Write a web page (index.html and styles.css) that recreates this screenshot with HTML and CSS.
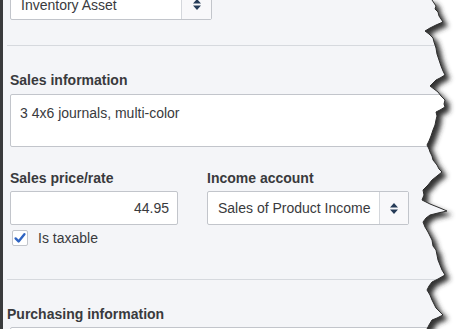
FILE: index.html
```html
<!DOCTYPE html>
<html lang="en">
<head>
	<meta charset="UTF-8">
	<title>Product / service</title>
	<link rel="stylesheet" href="styles.css">
</head>
<body>
<div class="frame">
	<div class="rail"></div>
	<div class="panel">
		<div class="select select-top">
			<span class="select-text">Inventory Asset</span>
			<span class="select-btn">
				<svg width="8" height="11" viewBox="0 0 8 11"><path d="M0 4.5 L4 0 L8 4.5 Z M0 6.5 L8 6.5 L4 11 Z" fill="#253b57"/></svg>
			</span>
		</div>

		<div class="rule"></div>

		<div class="label label-sales">Sales information</div>
		<div class="textarea">3 4x6 journals, multi-color</div>

		<div class="row">
			<div class="col col-price">
				<div class="label">Sales price/rate</div>
				<div class="input num">44.95</div>
				<div class="check">
					<span class="box">
						<svg width="14" height="14" viewBox="0 0 14 14"><path d="M2.6 7.4 L5.6 10.4 L11.4 3.2" fill="none" stroke="#2f64c2" stroke-width="2.4" stroke-linecap="round" stroke-linejoin="round"/></svg>
					</span>
					<span class="check-text">Is taxable</span>
				</div>
			</div>
			<div class="col col-income">
				<div class="label">Income account</div>
				<div class="select">
					<span class="select-text clip">Sales of Product Income</span>
					<span class="select-btn">
						<svg width="8" height="11" viewBox="0 0 8 11"><path d="M0 4.5 L4 0 L8 4.5 Z M0 6.5 L8 6.5 L4 11 Z" fill="#253b57"/></svg>
					</span>
				</div>
			</div>
		</div>

		<div class="rule rule-purchase"></div>

		<div class="label label-flush">Purchasing information</div>
		<div class="input input-wide"></div>
	</div>

	<!-- torn paper edge -->
	<svg class="tear" width="60" height="329" viewBox="0 0 60 329">
		<defs>
			<filter id="blur" x="-50%" y="-10%" width="200%" height="120%">
				<feGaussianBlur stdDeviation="2.4"/>
			</filter>
			<clipPath id="outside">
				<polygon points="60,0 22,0 24,3 26,6 25,9 28,12 29,16 31,19 33,22 26,25 20,28 15,31 19,34 23,38 24,42 26,48 27,54 29,60 31,66 33,71 35,75 30,78 26,80 23,83 20,86 24,89 28,92 31,96 35,100 34,104 35,107 30,110 26,112 27,116 26,120 25,125 23,130 21,136 19,141 17,145 19,149 20,152 22,156 23,160 27,165 29,169 32,172 27,176 22,180 18,185 13,190 14,195 12,200 20,204 30,208 37,211 28,213 20,215 16,218 13,222 15,227 18,232 20,236 22,240 23,246 26,250 27,255 28,260 30,265 32,270 35,275 28,279 22,282 19,286 17,290 20,295 22,300 24,304 26,308 30,312 33,315 27,318 22,320 19,325 17,329 60,329"/>
			</clipPath>
		</defs>
		<polygon points="60,0 22,0 24,3 26,6 25,9 28,12 29,16 31,19 33,22 26,25 20,28 15,31 19,34 23,38 24,42 26,48 27,54 29,60 31,66 33,71 35,75 30,78 26,80 23,83 20,86 24,89 28,92 31,96 35,100 34,104 35,107 30,110 26,112 27,116 26,120 25,125 23,130 21,136 19,141 17,145 19,149 20,152 22,156 23,160 27,165 29,169 32,172 27,176 22,180 18,185 13,190 14,195 12,200 20,204 30,208 37,211 28,213 20,215 16,218 13,222 15,227 18,232 20,236 22,240 23,246 26,250 27,255 28,260 30,265 32,270 35,275 28,279 22,282 19,286 17,290 20,295 22,300 24,304 26,308 30,312 33,315 27,318 22,320 19,325 17,329 60,329" fill="#fff"/>
		<g clip-path="url(#outside)">
			<polygon transform="translate(5,4)" filter="url(#blur)" fill="#333" points="-20,-10 22,0 24,3 26,6 25,9 28,12 29,16 31,19 33,22 26,25 20,28 15,31 19,34 23,38 24,42 26,48 27,54 29,60 31,66 33,71 35,75 30,78 26,80 23,83 20,86 24,89 28,92 31,96 35,100 34,104 35,107 30,110 26,112 27,116 26,120 25,125 23,130 21,136 19,141 17,145 19,149 20,152 22,156 23,160 27,165 29,169 32,172 27,176 22,180 18,185 13,190 14,195 12,200 20,204 30,208 37,211 28,213 20,215 16,218 13,222 15,227 18,232 20,236 22,240 23,246 26,250 27,255 28,260 30,265 32,270 35,275 28,279 22,282 19,286 17,290 20,295 22,300 24,304 26,308 30,312 33,315 27,318 22,320 19,325 17,329 -20,340"/>
		</g>
		<polyline fill="none" stroke="#2e2e2e" stroke-width="1" points="22,0 24,3 26,6 25,9 28,12 29,16 31,19 33,22 26,25 20,28 15,31 19,34 23,38 24,42 26,48 27,54 29,60 31,66 33,71 35,75 30,78 26,80 23,83 20,86 24,89 28,92 31,96 35,100 34,104 35,107 30,110 26,112 27,116 26,120 25,125 23,130 21,136 19,141 17,145 19,149 20,152 22,156 23,160 27,165 29,169 32,172 27,176 22,180 18,185 13,190 14,195 12,200 20,204 30,208 37,211 28,213 20,215 16,218 13,222 15,227 18,232 20,236 22,240 23,246 26,250 27,255 28,260 30,265 32,270 35,275 28,279 22,282 19,286 17,290 20,295 22,300 24,304 26,308 30,312 33,315 27,318 22,320 19,325 17,329"/>
	</svg>
</div>
</body>
</html>
```

FILE: styles.css
```css
* {
	margin: 0;
	padding: 0;
	box-sizing: border-box;
}
body {
	background: #fff;
	font-family: "Liberation Sans", Arial, sans-serif;
	font-size: 14px;
	color: #393a3d;
}
.frame {
	position: relative;
	display: flex;
	width: 470px;
	height: 329px;
	overflow: hidden;
}
.rail {
	width: 3px;
	flex: none;
	background: #3a3b3d;
}
.panel {
	flex: 1;
	padding-left: 4px;
	background: #f4f5f8;
}

/* inputs */
.select,
.input,
.textarea {
	display: flex;
	height: 34px;
	background: #fff;
	border: 1px solid #c2c5cb;
	border-radius: 2px;
	line-height: 16px;
}
.select-top {
	width: 202px;
	margin: -14px 0 0 3px;
}
.select-text {
	flex: 1;
	min-width: 0;
	padding: 8px 0 0 10px;
	white-space: nowrap;
	overflow: hidden;
}
.select-text.clip {
	margin-right: 5px;
}
.select-top .select-text {
	padding-top: 10px;
}
.select-btn {
	display: flex;
	align-items: center;
	justify-content: center;
	width: 30px;
	flex: none;
	border-left: 1px solid #d4d7dc;
	background: #f8f8fa;
}
.select-top .select-btn {
	padding-top: 3px;
}
.input {
	padding: 8px 8px 0;
}
.num {
	justify-content: flex-end;
}
.textarea {
	height: 53px;
	margin: 6px 0 0 3px;
	padding: 10px 9px;
}
.input-wide {
	margin-top: 5px;
	margin-left: 3px;
}

/* labels */
.label {
	font-weight: bold;
	line-height: 16px;
}
.label-sales {
	margin: 26px 0 0 3px;
}
.label-flush {
	margin-top: 26px;
}
.col .label {
	margin-bottom: 5px;
}

.rule {
	height: 1px;
	margin-top: 25px;
	background: #d6d9de;
}
.rule-purchase {
	margin-top: 33px;
}

/* price / income row */
.row {
	display: flex;
	gap: 29px;
	margin: 23px 0 0 3px;
}
.col-price {
	width: 168px;
}
.col-income {
	width: 202px;
}
.col-income .select-btn {
	width: 29px;
}

.check {
	display: flex;
	align-items: center;
	gap: 10px;
	margin: 5px 0 0 2px;
	line-height: 16px;
}
.box {
	display: flex;
	align-items: center;
	justify-content: center;
	width: 16px;
	height: 16px;
	background: #fff;
	border: 1px solid #c2c5cb;
	border-radius: 2px;
}

.tear {
	position: absolute;
	top: 0;
	right: 0;
}
```
